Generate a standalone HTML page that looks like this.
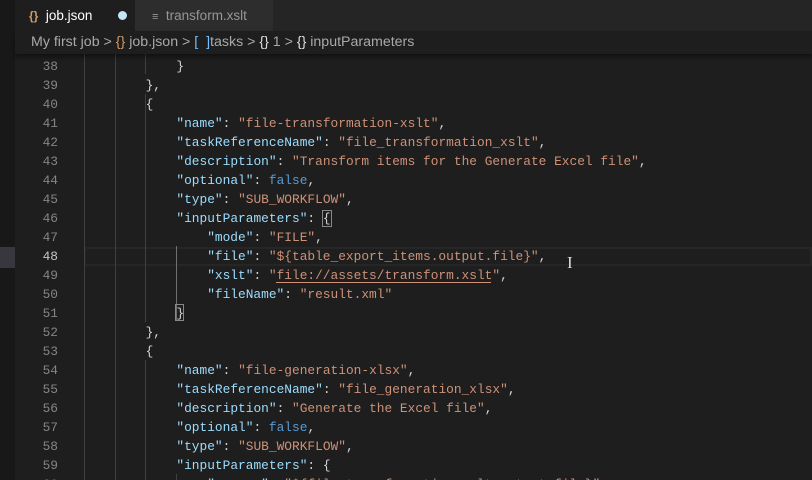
<!DOCTYPE html>
<html style="width:812px;height:480px;overflow:hidden"><head><meta charset="utf-8"><style>
*{margin:0;padding:0;box-sizing:border-box}
body{width:812px;height:480px;overflow:hidden;background:#1e1e1e;position:relative;font-family:"Liberation Sans",sans-serif}
.abs{position:absolute}
#tabs{left:0;top:0;width:812px;height:31px;background:#252526}
.tab{position:absolute;top:0;height:31px;font-size:13.5px;line-height:31px}
#crumb{left:15px;top:31px;width:797px;height:23px;background:#1e1e1e;font-size:14.2px;line-height:23px;color:#a9a9a9;box-shadow:0 3px 4px rgba(0,0,0,.45);z-index:5;padding-left:16px;white-space:nowrap}
.ln{position:absolute;left:15px;width:43px;text-align:right;font:12.85px "Liberation Mono",monospace;color:#858585;height:19px;line-height:19px}
.cd{position:absolute;left:84px;white-space:pre;font:12.85px "Liberation Mono",monospace;color:#d4d4d4;height:19px;line-height:19px}
.k{color:#9cdcfe}.s{color:#ce9178}.b{color:#569cd6}
.g{position:absolute;width:1px;background:#404040}
</style></head><body>
<div class="abs" style="left:0;top:0;width:15px;height:480px;background:#181818"></div>
<div class="abs" style="left:0;top:247px;width:15px;height:21px;background:#37373d"></div>
<div id="tabs" class="abs" style="left:15px;width:797px">
 <div class="tab" style="left:0;width:120px;background:#1e1e1e;color:#fff;padding-left:14px"><span style="color:#d19a66;font-weight:bold;font-size:12px">{}</span>&nbsp; job.json<span style="position:absolute;left:103px;top:11px;width:9px;height:9px;border-radius:50%;background:#c5e4f7"></span></div>
 <div class="tab" style="left:120px;width:138px;background:#2d2d2d;color:#969696;padding-left:17px"><span style="font-size:11px">&#8801;</span>&nbsp; transform.xslt</div>
</div>
<div id="crumb" class="abs">My first job &gt; <span style="color:#d19a66">{}</span> job.json &gt; <span style="color:#75beff">[&nbsp; ]</span>tasks &gt; <span style="color:#ddd">{}</span> 1 &gt; <span style="color:#ddd">{}</span> inputParameters</div>
<div class="abs" style="left:84px;top:247px;width:728px;height:19px;border:2px solid #262626"></div>
<div class="g" style="left:84px;top:54px;height:426px"></div>
<div class="g" style="left:115px;top:54px;height:426px"></div>
<div class="g" style="left:145px;top:54px;height:20px"></div>
<div class="g" style="left:145px;top:94px;height:228px"></div>
<div class="g" style="left:145px;top:360px;height:120px"></div>
<div class="g" style="left:176px;top:246px;height:74px;background:#707070"></div>
<div class="g" style="left:176px;top:474px;height:6px"></div>
<div class="abs" style="left:175px;top:304px;width:9px;height:17px;border:1px solid #888"></div>
<div id="code"></div>
<div class="abs" style="left:567px;top:253px;color:#ddd;font:17px 'Liberation Serif',serif">I</div>
<div class="abs" style="left:276px;top:282px;width:215px;height:1px;background:#ce9178"></div>
<script>
var L=[
[3,'<span>}</span>'],
[2,'},'],
[2,'{'],
[3,'<span class=k>"name"</span>: <span class=s>"file-transformation-xslt"</span>,'],
[3,'<span class=k>"taskReferenceName"</span>: <span class=s>"file_transformation_xslt"</span>,'],
[3,'<span class=k>"description"</span>: <span class=s>"Transform items for the Generate Excel file"</span>,'],
[3,'<span class=k>"optional"</span>: <span class=b>false</span>,'],
[3,'<span class=k>"type"</span>: <span class=s>"SUB_WORKFLOW"</span>,'],
[3,'<span class=k>"inputParameters"</span>: <span style="outline:1px solid #888">{</span>'],
[4,'<span class=k>"mode"</span>: <span class=s>"FILE"</span>,'],
[4,'<span class=k>"file"</span>: <span class=s>"${table_export_items.output.file}"</span>,'],
[4,'<span class=k>"xslt"</span>: <span class=s>"file://assets/transform.xslt"</span>,'],
[4,'<span class=k>"fileName"</span>: <span class=s>"result.xml"</span>'],
[3,'}'],
[2,'},'],
[2,'{'],
[3,'<span class=k>"name"</span>: <span class=s>"file-generation-xlsx"</span>,'],
[3,'<span class=k>"taskReferenceName"</span>: <span class=s>"file_generation_xlsx"</span>,'],
[3,'<span class=k>"description"</span>: <span class=s>"Generate the Excel file"</span>,'],
[3,'<span class=k>"optional"</span>: <span class=b>false</span>,'],
[3,'<span class=k>"type"</span>: <span class=s>"SUB_WORKFLOW"</span>,'],
[3,'<span class=k>"inputParameters"</span>: {'],
[4,'<span class=k>"source"</span>: <span class=s>"${file_transformation_xslt.output.file}"</span>,']
];
var h='';
for(var i=0;i<L.length;i++){var t=57+i*19;var n=38+i;
h+='<div class="ln" style="top:'+t+'px;'+(n==48?'color:#c6c6c6':'')+'">'+n+'</div>';
h+='<div class="cd" style="top:'+t+'px;left:'+(84+L[i][0]*30.8)+'px">'+L[i][1]+'</div>';}
document.getElementById('code').innerHTML=h;
</script>
</body></html>
